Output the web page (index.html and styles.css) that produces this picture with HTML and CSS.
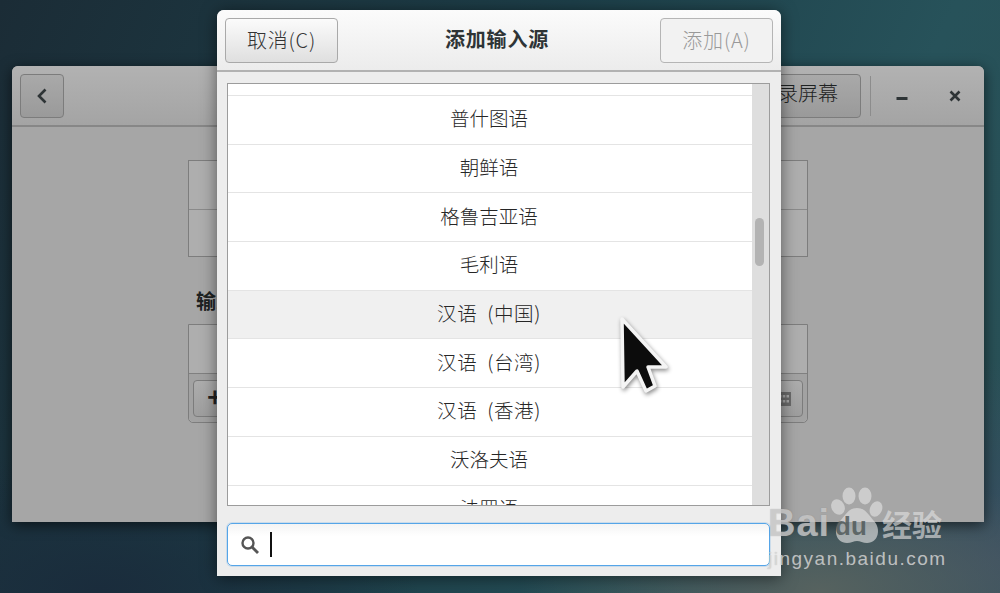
FILE: index.html
```html
<!DOCTYPE html>
<html lang="zh-CN">

<head>
    <meta charset="UTF-8">
    <meta name="viewport" content="width=device-width, initial-scale=1.0">
    <title>添加输入源</title>
    <link rel="stylesheet" href="styles.css">
</head>

<body>
    <div class="desktop">
        <div class="window">
            <div class="window-head">
                <button class="dim-btn back-btn">
                    <svg width="14" height="18" viewBox="0 0 14 18"><path d="M10.500 2.500 4 9l6.500 6.500" fill="none" stroke="#2e3436" stroke-width="2.600"/></svg>
                </button>
                <div class="head-space"></div>
                <button class="dim-btn record-btn">录屏幕</button>
                <div class="head-sep"></div>
                <div class="win-ctl">
                    <svg width="12" height="12" viewBox="0 0 12 12"><rect x="0.500" y="7" width="11" height="3" fill="#2e3436"/></svg>
                </div>
                <div class="win-ctl">
                    <svg width="12" height="12" viewBox="0 0 12 12"><path d="M1.500 1.500l9 9M10.500 1.500l-9 9" stroke="#2e3436" stroke-width="2.600"/></svg>
                </div>
            </div>
            <div class="window-body">
                <div class="panel">
                    <div class="panel-row"></div>
                    <div class="panel-row"></div>
                </div>
                <h3 class="section-title">输入源</h3>
                <div class="panel panel-round">
                    <div class="panel-row"></div>
                    <div class="panel-tools">
                        <button class="tool-btn">+</button>
                        <button class="tool-btn kbd-btn">
                            <svg width="14" height="14" viewBox="0 0 14 14"><path d="M0 0h14v14H0z" fill="#6a6a6a"/><path d="M2 3h2.500v2.500H2zM5.800 3h2.500v2.500H5.800zM9.500 3H12v2.500H9.500zM2 8h2.500v2.500H2zM5.800 8h2.500v2.500H5.800zM9.500 8H12v2.500H9.500z" fill="#a6a6a6"/></svg>
                        </button>
                    </div>
                </div>
            </div>
        </div>

        <div class="dialog">
            <div class="dialog-head">
                <button class="btn">取消(C)</button>
                <div class="dialog-title">添加输入源</div>
                <button class="btn btn-off">添加(A)</button>
            </div>
            <div class="dialog-body">
                <div class="list-box">
                    <div class="list">
                        <div class="row row-cut"></div>
                        <div class="row">普什图语</div>
                        <div class="row">朝鲜语</div>
                        <div class="row">格鲁吉亚语</div>
                        <div class="row">毛利语</div>
                        <div class="row row-hover row-wide">汉语 (中国)</div>
                        <div class="row row-wide">汉语 (台湾)</div>
                        <div class="row row-wide">汉语 (香港)</div>
                        <div class="row">沃洛夫语</div>
                        <div class="row">法罗语</div>
                    </div>
                    <div class="scrollbar">
                        <div class="thumb"></div>
                    </div>
                </div>
                <div class="search">
                    <svg width="20" height="20" viewBox="0 0 20 20"><circle cx="8" cy="8" r="5.500" fill="none" stroke="#555" stroke-width="2.400"/><path d="M12 12l6 6" stroke="#555" stroke-width="2.800"/></svg>
                    <div class="caret"></div>
                </div>
            </div>
        </div>

        <svg class="pointer" width="60" height="84" viewBox="0 0 60 84">
            <path d="M6 5 50 53H32L39 72 30 77 21 57 7 73Z" fill="#0c0c0c" stroke="#f4f4f4" stroke-width="3.500" stroke-linejoin="round"/>
        </svg>

        <div class="watermark">
            <svg class="paw" width="60" height="66" viewBox="0 0 60 66">
                <ellipse cx="22" cy="10" rx="6.500" ry="8.500"/>
                <ellipse cx="38" cy="10" rx="6.500" ry="8.500"/>
                <ellipse cx="11" cy="21" rx="6.500" ry="8" transform="rotate(-30 11 21)"/>
                <ellipse cx="49" cy="23" rx="6" ry="8" transform="rotate(25 49 23)"/>
                <path d="M30 22c9 0 12 8 17 13 7 7 5 22-7 22-4 0-7-2-10-2s-6 2-10 2C8 57 6 42 13 35c5-5 8-13 17-13Z"/>
            </svg>
            <div class="wm-top">
                <span class="wm-bai">Bai</span>
                <span class="wm-du">du</span>
                <span class="wm-jy">经验</span>
            </div>
            <div class="wm-url">jingyan.baidu.com</div>
        </div>
    </div>
</body>

</html>
```

FILE: styles.css
```css
/* 全局 */
* {
    box-sizing: border-box;
}

html,
body {
    margin: 0;
    height: 100%;
    overflow: hidden;
}

body {
    font-family: "Noto Sans CJK SC", "Noto Sans", sans-serif;
    color: #333;
}

button {
    font-family: inherit;
    padding: 0;
}

/* 桌面背景 */
.desktop {
    position: relative;
    width: 1000px;
    height: 593px;
    overflow: hidden;
    background:
        radial-gradient(ellipse 300px 120px at 820px 590px, #56625f, transparent),
        radial-gradient(ellipse 400px 200px at 1000px 560px, #3a4f63, transparent),
        radial-gradient(ellipse 320px 140px at 100px 590px, #1a2c3c, transparent),
        linear-gradient(115deg, #1b2c36 0%, #1d3f49 45%, #27525a 75%, #2a5055 100%);
}

/* 后面的窗口 */
.window {
    position: absolute;
    left: 12px;
    top: 66px;
    width: 972px;
    height: 456px;
    background: #a6a6a6;
    border-radius: 6px 6px 0 0;
    box-shadow: 0 3px 14px rgba(0, 0, 0, 0.6);
    display: flex;
    flex-direction: column;
}

.window-head {
    height: 61px;
    flex-shrink: 0;
    padding: 8px 0 8px 8px;
    display: flex;
    align-items: flex-start;
    background: linear-gradient(#b2b2b2, #a4a4a4);
    border-bottom: 2px solid #878787;
    border-radius: 6px 6px 0 0;
}

.dim-btn {
    height: 44px;
    border: 1px solid #7c7c7c;
    border-radius: 4px;
    background: linear-gradient(#a9a9a9, #9a9a9a);
    color: #2e3436;
    font-size: 20px;
}

.back-btn {
    width: 44px;
    display: flex;
    align-items: center;
    justify-content: center;
}

.head-space {
    flex: 1;
}

.record-btn {
    width: 100px;
    padding: 0 22px 8px 0;
    text-align: right;
    font-weight: 300;
    color: #1e2222;
}

.head-sep {
    width: 1px;
    height: 40px;
    margin: 2px 4px 0 9px;
    background: #8c8c8c;
}

.win-ctl {
    width: 53px;
    height: 44px;
    display: flex;
    align-items: center;
    justify-content: center;
}

.win-ctl:last-child {
    margin-right: 3px;
}

.window-body {
    padding: 33px 0 0 176px;
}

.panel {
    width: 620px;
    border: 1px solid #7d7d7d;
    background: #aeaeae;
}

.panel-round {
    border-radius: 0 0 5px 5px;
}

.panel-row {
    height: 48px;
}

.panel-row + .panel-row {
    height: 47px;
    border-top: 1px solid #8a8a8a;
}

.section-title {
    margin: 30px 0 10px 8px;
    font-size: 20px;
    line-height: 27px;
    font-weight: bold;
    color: #1e2222;
}

.panel-tools {
    height: 49px;
    padding: 6px 4px 5px;
    display: flex;
    justify-content: space-between;
    background: #a2a2a2;
    border-top: 1px solid #808080;
    border-radius: 0 0 5px 5px;
}

.tool-btn {
    width: 44px;
    height: 37px;
    padding-bottom: 5px;
    border: 1px solid #7c7c7c;
    border-radius: 4px;
    background: linear-gradient(#adadad, #9e9e9e);
    color: #222;
    font-size: 26px;
    font-weight: bold;
    line-height: 30px;
}

.kbd-btn {
    padding: 0 0 0 6px;
    display: flex;
    align-items: center;
    justify-content: center;
}

/* 对话框 */
.dialog {
    position: absolute;
    left: 217px;
    top: 10px;
    width: 564px;
    height: 566px;
    background: #ededed;
    border-radius: 7px 7px 0 0;
    box-shadow: 0 2px 16px rgba(0, 0, 0, 0.5);
    display: flex;
    flex-direction: column;
}

.dialog-head {
    height: 62px;
    flex-shrink: 0;
    padding: 8px 8px 0;
    display: flex;
    justify-content: space-between;
    background: linear-gradient(#fbfbfb, #ececec);
    border-bottom: 2px solid #b2b2b2;
    border-radius: 7px 7px 0 0;
}

.btn {
    width: 113px;
    height: 45px;
    padding-bottom: 2px;
    border: 1px solid #a9a9a9;
    border-radius: 4px;
    background: linear-gradient(#fbfbfb, #dfdfdf);
    color: #333;
    font-size: 20px;
    font-weight: 300;
    letter-spacing: 0.8px;
}

.btn-off {
    background: #f2f2f2;
    border-color: #b5b5b5;
    color: #999;
}

.dialog-title {
    margin-right: 4px;
    line-height: 42px;
    font-size: 20px;
    font-weight: bold;
    letter-spacing: 0.8px;
    color: #2e3436;
}

.dialog-body {
    flex: 1;
    padding: 11px 11px 10px 10px;
    display: flex;
    flex-direction: column;
}

.list-box {
    height: 423px;
    flex-shrink: 0;
    border: 1px solid #9c9c9c;
    background: #fff;
    display: flex;
    overflow: hidden;
}

.list {
    flex: 1;
    overflow: hidden;
}

.row {
    height: 48.7px;
    padding: 0 2px 4px 0;
    border-bottom: 1px solid #e4e4e4;
    display: flex;
    align-items: center;
    justify-content: center;
    font-size: 19.500px;
    font-weight: 300;
    color: #262626;
}

.row-cut {
    height: 12px;
    padding: 0;
}

.row-wide {
    word-spacing: 5px;
    letter-spacing: 0.6px;
}

.row-hover {
    background: #f0f0f0;
}

.scrollbar {
    width: 17px;
    padding: 134px 4px 0 3px;
    background: #dedede;
}

.thumb {
    width: 9px;
    height: 48px;
    border-radius: 5px;
    background: #b3b3b3;
}

.search {
    height: 43px;
    margin-top: 17px;
    padding-left: 12px;
    display: flex;
    align-items: center;
    gap: 10px;
    background: linear-gradient(#f4f4f4, #fff 30%);
    border: 1px solid #55a5e8;
    border-radius: 5px;
    box-shadow: 0 0 0 1px rgba(74, 155, 224, 0.2);
}

.caret {
    width: 2px;
    height: 25px;
    background: #111;
}

/* 鼠标指针 */
.pointer {
    position: absolute;
    left: 616px;
    top: 314px;
    filter: drop-shadow(1px 2px 2px rgba(0, 0, 0, 0.45)) blur(0.4px);
}

/* 水印 */
.watermark {
    position: absolute;
    left: 768px;
    top: 486px;
    width: 190px;
    color: rgba(222, 222, 222, 0.75);
}

.paw {
    position: absolute;
    left: 59px;
    top: 0;
    fill: rgba(225, 225, 225, 0.65);
}

.wm-top {
    position: relative;
    height: 58px;
    display: flex;
    align-items: flex-end;
    font-family: "Liberation Sans", sans-serif;
    font-weight: bold;
}

.wm-bai {
    width: 67px;
    font-size: 38px;
    line-height: 42px;
    letter-spacing: 1px;
    color: rgba(215, 215, 215, 0.7);
    text-shadow: 0 0 1px rgba(120, 120, 120, 0.5);
}

.wm-du {
    width: 47px;
    font-size: 26px;
    line-height: 36px;
    color: rgba(70, 80, 80, 0.75);
}

.wm-jy {
    font-family: "Noto Sans CJK SC", sans-serif;
    font-size: 30px;
    line-height: 42px;
    color: rgba(225, 225, 225, 0.65);
}

.wm-url {
    margin-top: 3px;
    font-family: "Liberation Sans", sans-serif;
    font-size: 19px;
    line-height: 24px;
    letter-spacing: 1.500px;
    white-space: nowrap;
    text-shadow: 0 0 1px rgba(120, 120, 120, 0.4);
}
```
